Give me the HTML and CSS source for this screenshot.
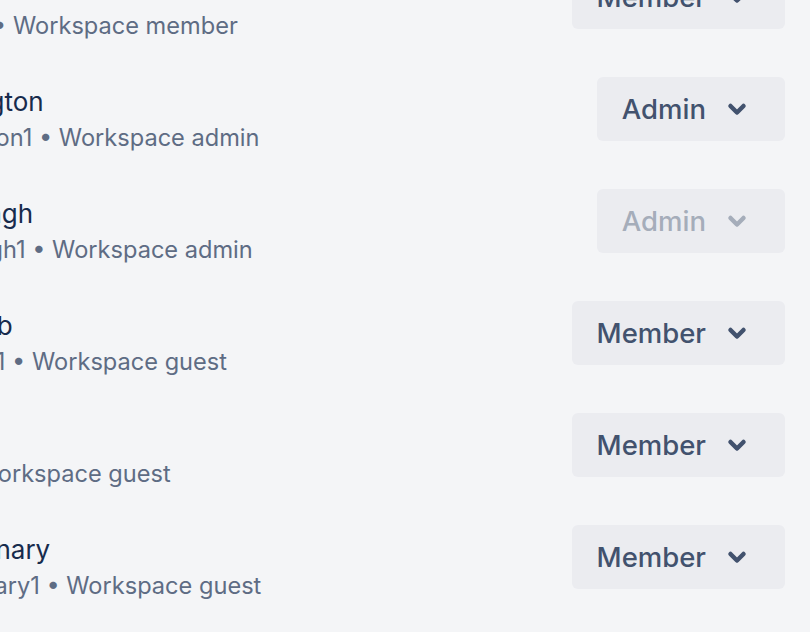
FILE: index.html
```html
<!DOCTYPE html>
<html lang="en">
<head>
<meta charset="utf-8">
<title>Workspace members</title>
<link rel="stylesheet" href="styles.css">
</head>
<body>
<ul class="list">
  <li class="row">
    <div class="info">
      <div class="name">Ana Martin</div>
      <div class="meta">ana.martin1 • Workspace member</div>
    </div>
    <button class="role" type="button"><span class="label">Member</span><svg class="chev" viewBox="0 0 48 48"><path d="M17.5 21l6.5 6.5 6.5-6.5"/></svg></button>
  </li>
  <li class="row">
    <div class="info">
      <div class="name">Ed Washington</div>
      <div class="meta">ed.washington1 • Workspace admin</div>
    </div>
    <button class="role" type="button"><span class="label">Admin</span><svg class="chev" viewBox="0 0 48 48"><path d="M17.5 21l6.5 6.5 6.5-6.5"/></svg></button>
  </li>
  <li class="row">
    <div class="info">
      <div class="name">Harleen Singh</div>
      <div class="meta">harneet_singh1 • Workspace admin</div>
    </div>
    <button class="role" type="button" disabled><span class="label">Admin</span><svg class="chev" viewBox="0 0 48 48"><path d="M17.5 21l6.5 6.5 6.5-6.5"/></svg></button>
  </li>
  <li class="row">
    <div class="info">
      <div class="name">Alim Yacoub</div>
      <div class="meta">alim_yacoub1 • Workspace guest</div>
    </div>
    <button class="role" type="button"><span class="label">Member</span><svg class="chev" viewBox="0 0 48 48"><path d="M17.5 21l6.5 6.5 6.5-6.5"/></svg></button>
  </li>
  <li class="row">
    <div class="info">
      <div class="name">Chen Lin</div>
      <div class="meta">chenlin1 • Workspace guest</div>
    </div>
    <button class="role" type="button"><span class="label">Member</span><svg class="chev" viewBox="0 0 48 48"><path d="M17.5 21l6.5 6.5 6.5-6.5"/></svg></button>
  </li>
  <li class="row">
    <div class="info">
      <div class="name">Andrew Canary</div>
      <div class="meta">andrew_canary1 • Workspace guest</div>
    </div>
    <button class="role" type="button"><span class="label">Member</span><svg class="chev" viewBox="0 0 48 48"><path d="M17.5 21l6.5 6.5 6.5-6.5"/></svg></button>
  </li>
</ul>
</body>
</html>
```

FILE: styles.css
```css
html, body {
  margin: 0;
  padding: 0;
  background: #f4f5f7;
  overflow: hidden;
}

body {
  width: 810px;
  height: 632px;
  font-family: Inter, "Noto Sans", "Liberation Sans", sans-serif;
}

.list {
  list-style: none;
  margin: -59px 0 0 -140px;
  padding: 0 25px 0 0;
}

.row {
  display: flex;
  justify-content: space-between;
  align-items: flex-start;
  height: 112px;
}

.info {
  padding-top: 33px;
  white-space: nowrap;
}

.name {
  font-size: 26px;
  line-height: 32px;
  color: #172b4d;
}

.meta {
  margin-top: 5px;
  font-size: 23.6px;
  line-height: 29px;
  color: #5e6c84;
}

.role {
  display: flex;
  align-items: center;
  margin-top: 24px;
  height: 64px;
  padding: 0 24px 0 25px;
  border: 0;
  border-radius: 6px;
  background: #ebecf0;
  color: #42526e;
  font-family: inherit;
  font-size: 27.5px;
  font-weight: 500;
  cursor: pointer;
}

.role:disabled {
  color: #a5adba;
  cursor: default;
}

.label {
  line-height: 40px;
}

.chev {
  width: 48px;
  height: 48px;
  margin-left: 7px;
  fill: none;
  stroke: currentColor;
  stroke-width: 4.5;
  stroke-linecap: round;
  stroke-linejoin: round;
}
```
